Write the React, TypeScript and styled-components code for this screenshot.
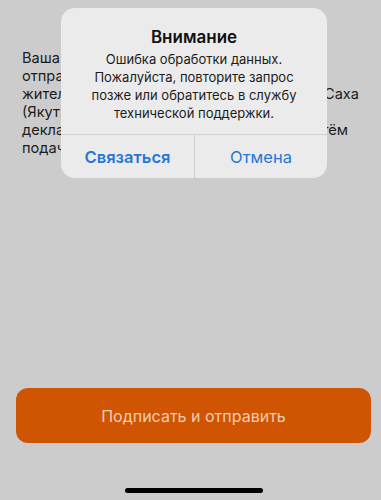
import React from "react";
import styled, { createGlobalStyle } from "styled-components";

const Global = createGlobalStyle`
  html, body { margin: 0; padding: 0; background: #cccccc; }
  body { font-family: Inter, "Noto Sans", "Liberation Sans", sans-serif; -webkit-font-smoothing: antialiased; }
`;

const Screen = styled.div`
  position: relative;
  width: 381px;
  height: 500px;
  overflow: hidden;
  background: #cccccc;
  display: flex;
  flex-direction: column;
`;

const Body = styled.div`
  padding: 49px 22px 0 22px;
  color: #1c1c1c;
  font-size: 14.6px;
  line-height: 18.1px;
  flex: 1;
`;

const Line = styled.span<{ $full?: boolean; $end?: number }>`
  display: block;
  text-align: ${(p) => (p.$full ? "justify" : "left")};
  text-align-last: ${(p) => (p.$full ? "justify" : "auto")};
  white-space: nowrap;
  padding-right: ${(p) => p.$end ?? 0}px;
`;

const Footer = styled.div`
  display: flex;
  flex-direction: column;
  align-items: center;
  padding: 0 10px 7px 16px;
`;

const PrimaryButton = styled.button`
  width: 355px;
  height: 55px;
  border: none;
  border-radius: 12px;
  background: #cf5503;
  color: #f3cdb0;
  font-family: inherit;
  font-size: 16px;
  font-weight: 400;
  margin-bottom: 45px;
`;

const HomeIndicator = styled.div`
  width: 138px;
  height: 5px;
  border-radius: 3px;
  background: #000;
`;

const Alert = styled.div`
  position: absolute;
  left: 61px;
  top: 8px;
  width: 266px;
  background: #ebebeb;
  border-radius: 14px;
  overflow: hidden;
  text-align: center;
`;

const AlertContent = styled.div`
  padding: 18px 16px 12px;
  display: flex;
  flex-direction: column;
  gap: 2px;
`;

const AlertTitle = styled.div`
  font-size: 17px;
  line-height: 22px;
  font-weight: 600;
  color: #111;
`;

const AlertMessage = styled.div`
  font-size: 13px;
  line-height: 18px;
  color: #1c1c1c;
`;

const AlertActions = styled.div`
  display: grid;
  grid-template-columns: 1fr 1fr;
  border-top: 1px solid #cfcfcf;
`;

const AlertAction = styled.button<{ $bold?: boolean }>`
  height: 43px;
  border: none;
  background: transparent;
  font-family: inherit;
  font-size: 16.5px;
  font-weight: ${(p) => (p.$bold ? 600 : 400)};
  color: #2576d6;
  & + & {
    border-left: 1px solid #cfcfcf;
  }
`;

export default function App() {
  return (
    <>
      <Global />
      <Screen>
        <Body aria-hidden="true">
          <Line>Ваша декларация</Line>
          <Line>отправлена</Line>
          <Line $full>жителей Арктической зоны Республики Саха</Line>
          <Line>(Якутия)</Line>
          <Line $full $end={11}>декларация подаётся в налоговую путём</Line>
          <Line>подачи</Line>
        </Body>
        <Footer>
          <PrimaryButton>Подписать и отправить</PrimaryButton>
          <HomeIndicator />
        </Footer>
        <Alert role="alertdialog">
          <AlertContent>
            <AlertTitle>Внимание</AlertTitle>
            <AlertMessage>
              Ошибка обработки данных.
              <br />
              Пожалуйста, повторите запрос позже или обратитесь в службу технической поддержки.
            </AlertMessage>
          </AlertContent>
          <AlertActions>
            <AlertAction $bold>Связаться</AlertAction>
            <AlertAction>Отмена</AlertAction>
          </AlertActions>
        </Alert>
      </Screen>
    </>
  );
}
